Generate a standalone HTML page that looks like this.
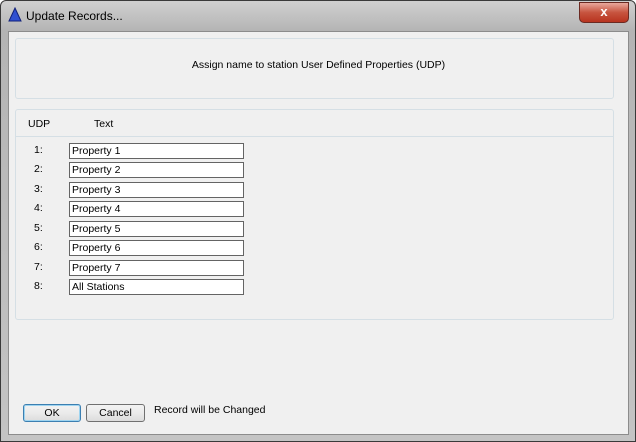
<!DOCTYPE html><html><head><style>
body{margin:0;width:636px;height:442px;overflow:hidden;font-family:"Liberation Sans",sans-serif;font-size:10.5px;color:#000;}
.win{position:absolute;left:0;top:0;width:634px;height:440px;border:1px solid #3a3a3a;border-radius:6px 6px 0 0;background:linear-gradient(#d0d0d0,#b4b4b4 30px,#c4c4c4);}
.title{position:absolute;left:25px;top:8px;font-size:12px;color:#000;}
.close{position:absolute;left:578px;top:1px;width:48px;height:19px;border:1px solid #6b2a22;border-radius:0 0 5px 5px;background:linear-gradient(#e8a89c,#c7543f 50%,#b8341f);color:#fff;font-weight:bold;font-size:13px;text-align:center;line-height:18px;}
.client{position:absolute;left:8px;top:31px;width:619px;height:402px;background:#f0f0f0;border:1px solid #8c8c8c;}
.grp{position:absolute;border:1px solid #d5dfe5;border-radius:3px;}
.inp{position:absolute;left:60px;width:171px;height:14px;border:1px solid #646464;background:#fff;line-height:15px;padding-left:2px;}
.lbl{position:absolute;left:25px;}
.btn{position:absolute;top:372px;height:16px;border:1px solid #707070;border-radius:3px;background:linear-gradient(#f2f2f2,#ebebeb 50%,#dcdcdc);text-align:center;line-height:17px;}
</style></head><body>
<div class="win">
<svg style="position:absolute;left:7px;top:6px" width="14" height="15"><polygon points="7,1 13,14 1,14" fill="#3050d0" stroke="#10207a"/></svg>
<div class="title">Update Records...</div>
<div class="close">x</div>
</div>
<div class="client">
<div class="grp" style="left:6px;top:6px;width:597px;height:59px;"></div>
<div style="position:absolute;left:0;width:619px;top:27px;text-align:center;">Assign name to station User Defined Properties (UDP)</div>
<div class="grp" style="left:6px;top:77px;width:597px;height:209px;"></div>
<div style="position:absolute;left:7px;top:104px;width:597px;border-top:1px solid #d5dfe5;"></div>
<div style="position:absolute;left:19px;top:86px;">UDP</div>
<div style="position:absolute;left:85px;top:86px;">Text</div>
<div class="lbl" style="top:112px">1:</div><div class="inp" style="top:111px">Property 1</div>
<div class="lbl" style="top:131px">2:</div><div class="inp" style="top:130px">Property 2</div>
<div class="lbl" style="top:151px">3:</div><div class="inp" style="top:150px">Property 3</div>
<div class="lbl" style="top:170px">4:</div><div class="inp" style="top:169px">Property 4</div>
<div class="lbl" style="top:190px">5:</div><div class="inp" style="top:189px">Property 5</div>
<div class="lbl" style="top:209px">6:</div><div class="inp" style="top:208px">Property 6</div>
<div class="lbl" style="top:229px">7:</div><div class="inp" style="top:228px">Property 7</div>
<div class="lbl" style="top:248px">8:</div><div class="inp" style="top:247px">All Stations</div>
<div class="btn" style="left:14px;width:56px;border-color:#3c7fb1;box-shadow:inset 0 0 0 1px #9ed4f0;">OK</div>
<div class="btn" style="left:77px;width:57px;">Cancel</div>
<div style="position:absolute;left:145px;top:372px;">Record will be Changed</div>
</div>
</body></html>
